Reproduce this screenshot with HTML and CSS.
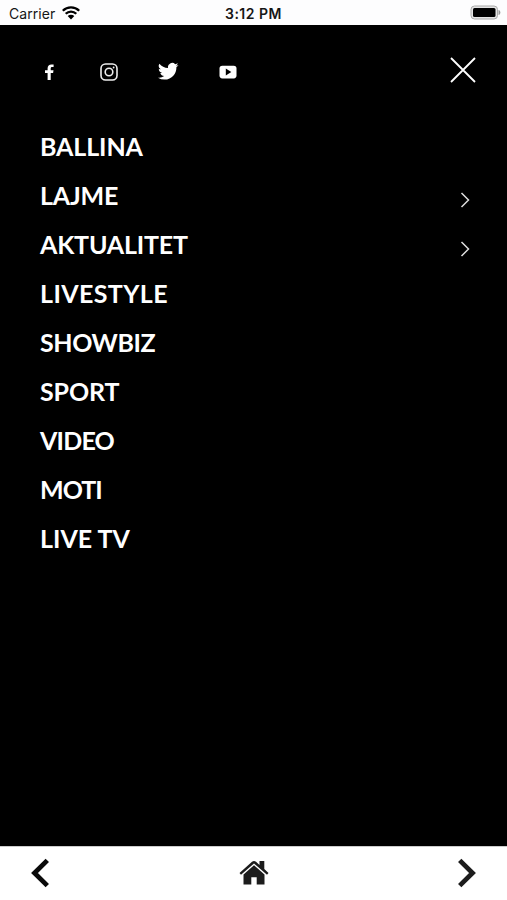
FILE: index.html
```html
<!DOCTYPE html>
<html lang="sq">
<head>
  <meta charset="utf-8" />
  <meta name="viewport" content="width=device-width, initial-scale=1" />
  <title>Menu</title>
  <link rel="stylesheet" href="styles.css">
</head>
<body>
  <div class="screen">
    <div class="status-bar">
      <div class="carrier">
        <span>Carrier</span>
        <svg class="wifi" viewBox="0 0 18 14" width="18" height="14">
          <path d="M0.8 4.8C5.4 0.2 12.6 0.2 17.2 4.8M3.7 7.8C6.7 4.8 11.3 4.8 14.3 7.8" fill="none" stroke="#000" stroke-width="2.3"/>
          <path d="M5.7 10C7.6 8.2 10.4 8.2 12.3 10L9 13.4z"/>
        </svg>
      </div>
      <span class="time">3:12 PM</span>
      <svg class="battery" viewBox="0 0 32 16" width="32" height="16">
        <rect x="1" y="1" width="26.5" height="13" rx="3.5" fill="#e4e4e4" stroke="#aaa" stroke-width="1"/>
        <rect x="3" y="3" width="22.5" height="9" rx="1.5"/>
        <path d="M28.5 5C31 5.6 31 9.4 28.5 10z" fill="#999"/>
      </svg>
    </div>

    <main class="menu">
      <div class="menu-top">
        <div class="social">
          <a href="#" aria-label="Facebook">
            <svg viewBox="0 0 20 20" width="20" height="20" fill="#fff">
              <path d="M8.6 18V11.1H6V8.3H8.6V6.3C8.6 3.7 10.1 2.4 12.5 2.4H14.6V5.1H13.2C12 5.1 11.7 5.700 11.7 6.600V8.300H14.500L14.100 11.100H11.700V18z"/>
            </svg>
          </a>
          <a href="#" aria-label="Instagram">
            <svg viewBox="0 0 20 20" width="20" height="20" fill="none" stroke="#eee" stroke-width="1.6">
              <rect x="2" y="2" width="16" height="16" rx="4.5"/>
              <circle cx="10" cy="10" r="3.8"/>
              <circle cx="14.6" cy="5.5" r="0.9" fill="#eee" stroke="none"/>
            </svg>
          </a>
          <a href="#" aria-label="Twitter">
            <svg viewBox="0 0 24 24" width="20.500" height="20.500" fill="#fff">
              <path d="M23.950 4.570a10 10 0 0 1-2.820.77 4.960 4.960 0 0 0 2.160-2.720c-.95.55-2 .95-3.130 1.180a4.920 4.920 0 0 0-8.380 4.480C7.690 8.090 4.070 6.130 1.640 3.160a4.920 4.920 0 0 0 1.520 6.570 4.900 4.900 0 0 1-2.230-.61v.06a4.920 4.920 0 0 0 3.950 4.830 5 5 0 0 1-2.210.08 4.940 4.940 0 0 0 4.600 3.420A9.870 9.870 0 0 1 0 19.540a13.990 13.990 0 0 0 7.550 2.210c9.050 0 14-7.500 14-13.980 0-.21 0-.42-.02-.63a9.940 9.940 0 0 0 2.420-2.570z"/>
            </svg>
          </a>
          <a href="#" aria-label="YouTube">
            <svg viewBox="0 0 20 20" width="20" height="20">
              <rect x="1.5" y="3.8" width="17" height="12.6" rx="2.8" fill="#fff"/>
              <path d="M7.8 6.5L13.3 10L7.8 13.5z"/>
            </svg>
          </a>
        </div>
        <button class="close-button" aria-label="Close">
          <svg viewBox="0 0 26 26" width="26" height="26" fill="none" stroke="#fff" stroke-width="1.8">
            <path d="M1 1L25 25M25 1L1 25"/>
          </svg>
        </button>
      </div>

      <nav class="links">
        <a href="#" class="ballina">BALLINA</a>
        <a href="#" class="lajme">LAJME
          <svg class="arrow" viewBox="0 0 10 16" width="10" height="16"><path d="M1.5 1L8.5 8L1.5 15"/></svg>
        </a>
        <a href="#" class="aktualitet">AKTUALITET
          <svg class="arrow" viewBox="0 0 10 16" width="10" height="16"><path d="M1.5 1L8.5 8L1.5 15"/></svg>
        </a>
        <a href="#" class="livestyle">LIVESTYLE</a>
        <a href="#" class="showbiz">SHOWBIZ</a>
        <a href="#" class="sport">SPORT</a>
        <a href="#" class="video">VIDEO</a>
        <a href="#" class="moti">MOTI</a>
        <a href="#" class="live-tv">LIVE TV</a>
      </nav>
    </main>

    <footer class="toolbar">
      <svg viewBox="0 0 20 30" width="20" height="30" fill="none" stroke="#0a0a0a" stroke-width="4.8">
        <path d="M17.3 2.4L4.5 15L17.3 27.6"/>
      </svg>
      <svg viewBox="0 0 30 26" width="30" height="26" fill="#1c1c1c">
        <path d="M20.5 1H25.3V9L29.5 13L28 14.8L15 3.5L2 14.8L0.5 13L13 1.8Q15 0.2 17 1.8L20.5 5z"/>
        <path d="M15 5.3L25.5 14.5V24.5H17.7V17.3H12.3V24.5H4.5V14.5z"/>
      </svg>
      <svg viewBox="0 0 20 30" width="20" height="30" fill="none" stroke="#1c1c1c" stroke-width="4.8">
        <path d="M2.7 2.4L15.5 15L2.7 27.6"/>
      </svg>
    </footer>
  </div>
</body>
</html>
```
FILE: styles.css
```css
* {
  margin: 0;
  padding: 0;
  box-sizing: border-box;
}

body {
  background-color: #000;
  font-family: Lato, "Liberation Sans", sans-serif;
}

.screen {
  display: flex;
  flex-direction: column;
  height: 100vh;
  overflow: hidden;
}

/* Status bar */
.status-bar {
  display: grid;
  grid-template-columns: 1fr auto 1fr;
  align-items: center;
  height: 25px;
  padding: 2px 5px 0 9px;
  background-color: #fdfdfe;
  color: #161616;
  font-family: Inter, sans-serif;
  font-size: 14px;
}

.carrier {
  display: flex;
  align-items: center;
  gap: 7px;
  letter-spacing: 0.05px;
}

.wifi {
  margin-top: -2px;
}

.time {
  font-weight: 600;
  letter-spacing: 0.5px;
  margin-left: -4px;
}

.battery {
  justify-self: end;
  margin-top: -1px;
}

/* Menu */
.menu {
  flex: 1;
}

.menu-top {
  display: flex;
  justify-content: space-between;
  align-items: center;
  height: 93px;
  padding: 0 31px 0 39px;
}

.social {
  display: flex;
  gap: 39px;
}

.social a {
  display: flex;
  justify-content: center;
  align-items: center;
  width: 20.5px;
}

.social svg {
  flex-shrink: 0;
}

.close-button {
  background: none;
  border: none;
  cursor: pointer;
  width: 26px;
  height: 26px;
  margin-bottom: 3px;
}

.close-button svg {
  display: block;
}

.links {
  padding: 4px 37px 0 40px;
}

.links a {
  display: flex;
  justify-content: space-between;
  align-items: center;
  height: 48.9px;
  color: #fff;
  font-size: 25px;
  font-weight: 700;
  text-decoration: none;
}

.links .ballina,
.links .sport {
  letter-spacing: -0.1px;
}

.links .lajme,
.links .aktualitet {
  letter-spacing: -0.2px;
}

.links .livestyle {
  letter-spacing: 0.4px;
}

.links .showbiz {
  letter-spacing: -0.4px;
}

.links .video {
  letter-spacing: -0.8px;
}

.links .moti {
  letter-spacing: -1px;
}

.arrow {
  margin-top: 10px;
  fill: none;
  stroke: #ddd;
  stroke-width: 1.5;
}

/* Bottom toolbar */
.toolbar {
  display: flex;
  justify-content: space-between;
  align-items: center;
  height: 54px;
  padding: 0 30px 2px;
  background-color: #fff;
  border-top: 1px solid #ccc;
}
```
